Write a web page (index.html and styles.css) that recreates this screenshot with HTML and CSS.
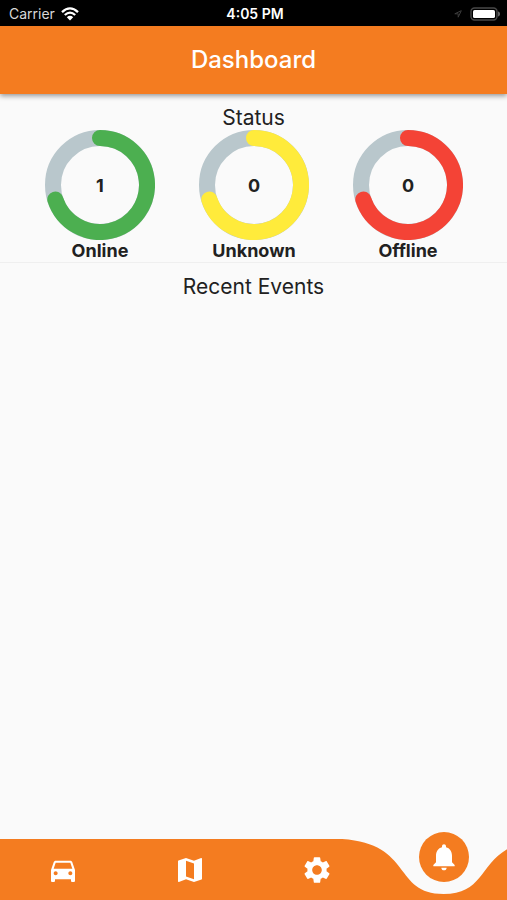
FILE: index.html
```html
<!DOCTYPE html>
<html lang="en">
<head>
<meta charset="utf-8">
<meta name="viewport" content="width=device-width, initial-scale=1">
<title>Dashboard</title>
<link rel="stylesheet" href="styles.css">
</head>
<body>
<div class="status-bar">
  <div class="carrier">
    <span>Carrier</span>
    <svg class="wifi" viewBox="0 0 18 14" aria-hidden="true">
      <path d="M1 5.2Q9-2.4 17 5.2M3.8 8Q9 3.2 14.2 8" fill="none" stroke="#fff" stroke-width="2.3"/>
      <path d="M5.8 10.2Q9 7.4 12.2 10.2L9 13.6z" fill="#fff"/>
    </svg>
  </div>
  <span class="clock">4:05 PM</span>
  <div class="indicators">
    <svg class="location" viewBox="0 0 8 8" aria-hidden="true">
      <path d="M7.3.7L.8 3.8h3.4v3.4z" fill="none" stroke="#3c3c3c"/>
    </svg>
    <svg class="battery" viewBox="0 0 31 14" aria-hidden="true">
      <rect x="1" y="1" width="26" height="12" rx="3.5" fill="none" stroke="#484848" stroke-width="1.4"/>
      <rect x="3" y="3" width="22" height="8" rx="1.6" fill="#fff"/>
      <path d="M28.6 4.8q2 2.2 0 4.4z" fill="#666" stroke="#666"/>
    </svg>
  </div>
</div>
<header class="app-bar"><h1>Dashboard</h1></header>
<main>
  <section class="status">
    <h2>Status</h2>
    <div class="gauges">
      <div class="gauge online">
        <div class="ring">
          <svg viewBox="0 0 110 110" aria-hidden="true">
            <circle class="track" cx="55" cy="55" r="47"/>
            <path class="arc" d="M55 8A47 47 0 1 1 10.3 69.5"/>
          </svg>
          <span>1</span>
        </div>
        <h3>Online</h3>
      </div>
      <div class="gauge unknown">
        <div class="ring">
          <svg viewBox="0 0 110 110" aria-hidden="true">
            <circle class="track" cx="55" cy="55" r="47"/>
            <path class="arc" d="M55 8A47 47 0 1 1 10.3 69.5"/>
          </svg>
          <span>0</span>
        </div>
        <h3>Unknown</h3>
      </div>
      <div class="gauge offline">
        <div class="ring">
          <svg viewBox="0 0 110 110" aria-hidden="true">
            <circle class="track" cx="55" cy="55" r="47"/>
            <path class="arc" d="M55 8A47 47 0 1 1 10.3 69.5"/>
          </svg>
          <span>0</span>
        </div>
        <h3>Offline</h3>
      </div>
    </div>
  </section>
  <section class="events">
    <h2>Recent Events</h2>
  </section>
</main>
<nav class="tabs">
  <svg class="tabs-shape" viewBox="0 0 507 61" preserveAspectRatio="none" aria-hidden="true">
    <path d="M0 0H342.2C413.2 4.6 392.9 55 443.6 55S474 4.6 545 0V61H0z"/>
  </svg>
  <button type="button" aria-label="Vehicles">
    <svg class="icon" viewBox="0 0 24 24"><path d="M18.92 6.01C18.72 5.42 18.16 5 17.5 5h-11c-.66 0-1.21.42-1.42 1.01L3 12v8c0 .55.45 1 1 1h1c.55 0 1-.45 1-1v-1h12v1c0 .55.45 1 1 1h1c.55 0 1-.45 1-1v-8l-2.08-5.99zM6.5 16c-.83 0-1.5-.67-1.5-1.5S5.67 13 6.5 13s1.5.67 1.5 1.5S7.33 16 6.5 16zm11 0c-.83 0-1.5-.67-1.5-1.5s.67-1.5 1.5-1.5 1.5.67 1.5 1.5-.67 1.5-1.5 1.5zM5 11l1.5-4.5h11L19 11H5z"/></svg>
  </button>
  <button type="button" aria-label="Map">
    <svg class="icon" viewBox="0 0 24 24"><path d="M20.5 3l-.16.03L15 5.1 9 3 3.36 4.9c-.21.07-.36.25-.36.48V20.5c0 .28.22.5.5.5l.16-.03L9 18.9l6 2.1 5.64-1.9c.21-.07.36-.25.36-.48V3.5c0-.28-.22-.5-.5-.5zM15 19l-6-2.11V5l6 2.11V19z"/></svg>
  </button>
  <button type="button" aria-label="Settings">
    <svg class="icon" viewBox="0 0 24 24"><path d="M19.14 12.94c.04-.3.06-.61.06-.94 0-.32-.02-.64-.07-.94l2.03-1.58c.18-.14.23-.41.12-.61l-1.92-3.32c-.12-.22-.37-.29-.59-.22l-2.39.96c-.5-.38-1.03-.7-1.62-.94l-.36-2.54c-.04-.24-.24-.41-.48-.41h-3.84c-.24 0-.43.17-.47.41l-.36 2.54c-.59.24-1.13.57-1.62.94l-2.39-.96c-.22-.08-.47 0-.59.22L2.74 8.87c-.12.21-.08.47.12.61l2.03 1.58c-.05.3-.09.63-.09.94s.02.64.07.94l-2.03 1.58c-.18.14-.23.41-.12.61l1.92 3.32c.12.22.37.29.59.22l2.39-.96c.5.38 1.03.7 1.62.94l.36 2.54c.05.24.24.41.48.41h3.84c.24 0 .44-.17.47-.41l.36-2.54c.59-.24 1.13-.56 1.62-.94l2.39.96c.22.08.47 0 .59-.22l1.92-3.32c.12-.22.07-.47-.12-.61l-2.01-1.58zM12 15.6c-1.98 0-3.6-1.62-3.6-3.6s1.62-3.6 3.6-3.6 3.6 1.62 3.6 3.6-1.62 3.6-3.6 3.6z"/></svg>
  </button>
  <button type="button" class="active" aria-label="Notifications" aria-current="page">
    <span class="bubble">
      <svg class="icon" viewBox="0 0 24 24"><path d="M12 22c1.1 0 2-.9 2-2h-4c0 1.1.89 2 2 2zm6-6v-5c0-3.07-1.64-5.64-4.5-6.32V4c0-.83-.67-1.5-1.5-1.5s-1.5.67-1.5 1.5v.68C7.63 5.36 6 7.92 6 11v5l-2 2v1h16v-1l-2-2z"/></svg>
    </span>
  </button>
</nav>
</body>
</html>
```
FILE: styles.css
```css
:root {
  --orange: #f47c20;
  --paper: #fafafa;
  --ink: #212121;
}

* {
  box-sizing: border-box;
}

body {
  margin: 0;
  min-height: 100vh;
  display: flex;
  flex-direction: column;
  background: var(--paper);
  color: var(--ink);
  font-family: Inter, "Liberation Sans", sans-serif;
}

h1, h2, h3 {
  margin: 0;
}

svg {
  display: block;
}

.status-bar {
  display: grid;
  grid-template-columns: 1fr auto 1fr;
  align-items: center;
  height: 26px;
  padding: 2px 6px 0 9px;
  background: #000;
  color: #fff;
  font-size: 14px;
  line-height: 20px;
}

.carrier {
  display: flex;
  align-items: center;
  gap: 6px;
  color: #d8d8d8;
}

.wifi {
  width: 18px;
  height: 14px;
}

.clock {
  font-weight: 600;
}

.indicators {
  display: flex;
  align-items: center;
  justify-content: flex-end;
  gap: 8px;
}

.location {
  width: 8px;
  height: 8px;
}

.battery {
  width: 31px;
  height: 14px;
}

.app-bar {
  display: flex;
  align-items: center;
  justify-content: center;
  height: 68px;
  background: var(--orange);
  color: #fff;
  box-shadow: 0 2px 5px rgba(0, 0, 0, 0.4);
}

.app-bar h1 {
  font-size: 24px;
  line-height: 28px;
  font-weight: 500;
}

main {
  flex: 1;
  text-align: center;
}

h2 {
  font-size: 21px;
  line-height: 24px;
  font-weight: 400;
}

.status {
  padding-top: 12px;
  border-bottom: 1px solid #efefef;
}

.gauges {
  display: grid;
  grid-template-columns: repeat(3, 1fr);
  padding: 0 22px 0 23px;
}

.ring {
  display: grid;
  place-items: center;
  font-size: 18px;
  font-weight: 700;
}

.ring > * {
  grid-area: 1 / 1;
}

.ring svg {
  width: 110px;
  height: 110px;
}

.track, .arc {
  fill: none;
  stroke-width: 16;
}

.track {
  stroke: #b9c7cc;
}

.arc {
  stroke-linecap: round;
}

.online .arc {
  stroke: #4caf50;
}

.unknown .arc {
  stroke: #ffeb3b;
}

.offline .arc {
  stroke: #f44336;
}

h3 {
  font-size: 18px;
  line-height: 22px;
  font-weight: 700;
}

.events {
  padding-top: 12px;
}

.tabs {
  position: relative;
  display: grid;
  grid-template-columns: repeat(4, 1fr);
  height: 61px;
}

.tabs-shape {
  position: absolute;
  inset: 0;
  width: 100%;
  height: 100%;
  fill: var(--orange);
}

.tabs button {
  position: relative;
  display: flex;
  align-items: center;
  justify-content: center;
  padding: 0;
  border: 0;
  background: none;
}

.icon {
  width: 32px;
  height: 32px;
  fill: #fff;
}

.tabs .active {
  align-items: flex-start;
}

.bubble {
  display: grid;
  place-items: center;
  width: 50px;
  height: 50px;
  margin-top: -7px;
  border-radius: 50%;
  background: var(--orange);
}
```
